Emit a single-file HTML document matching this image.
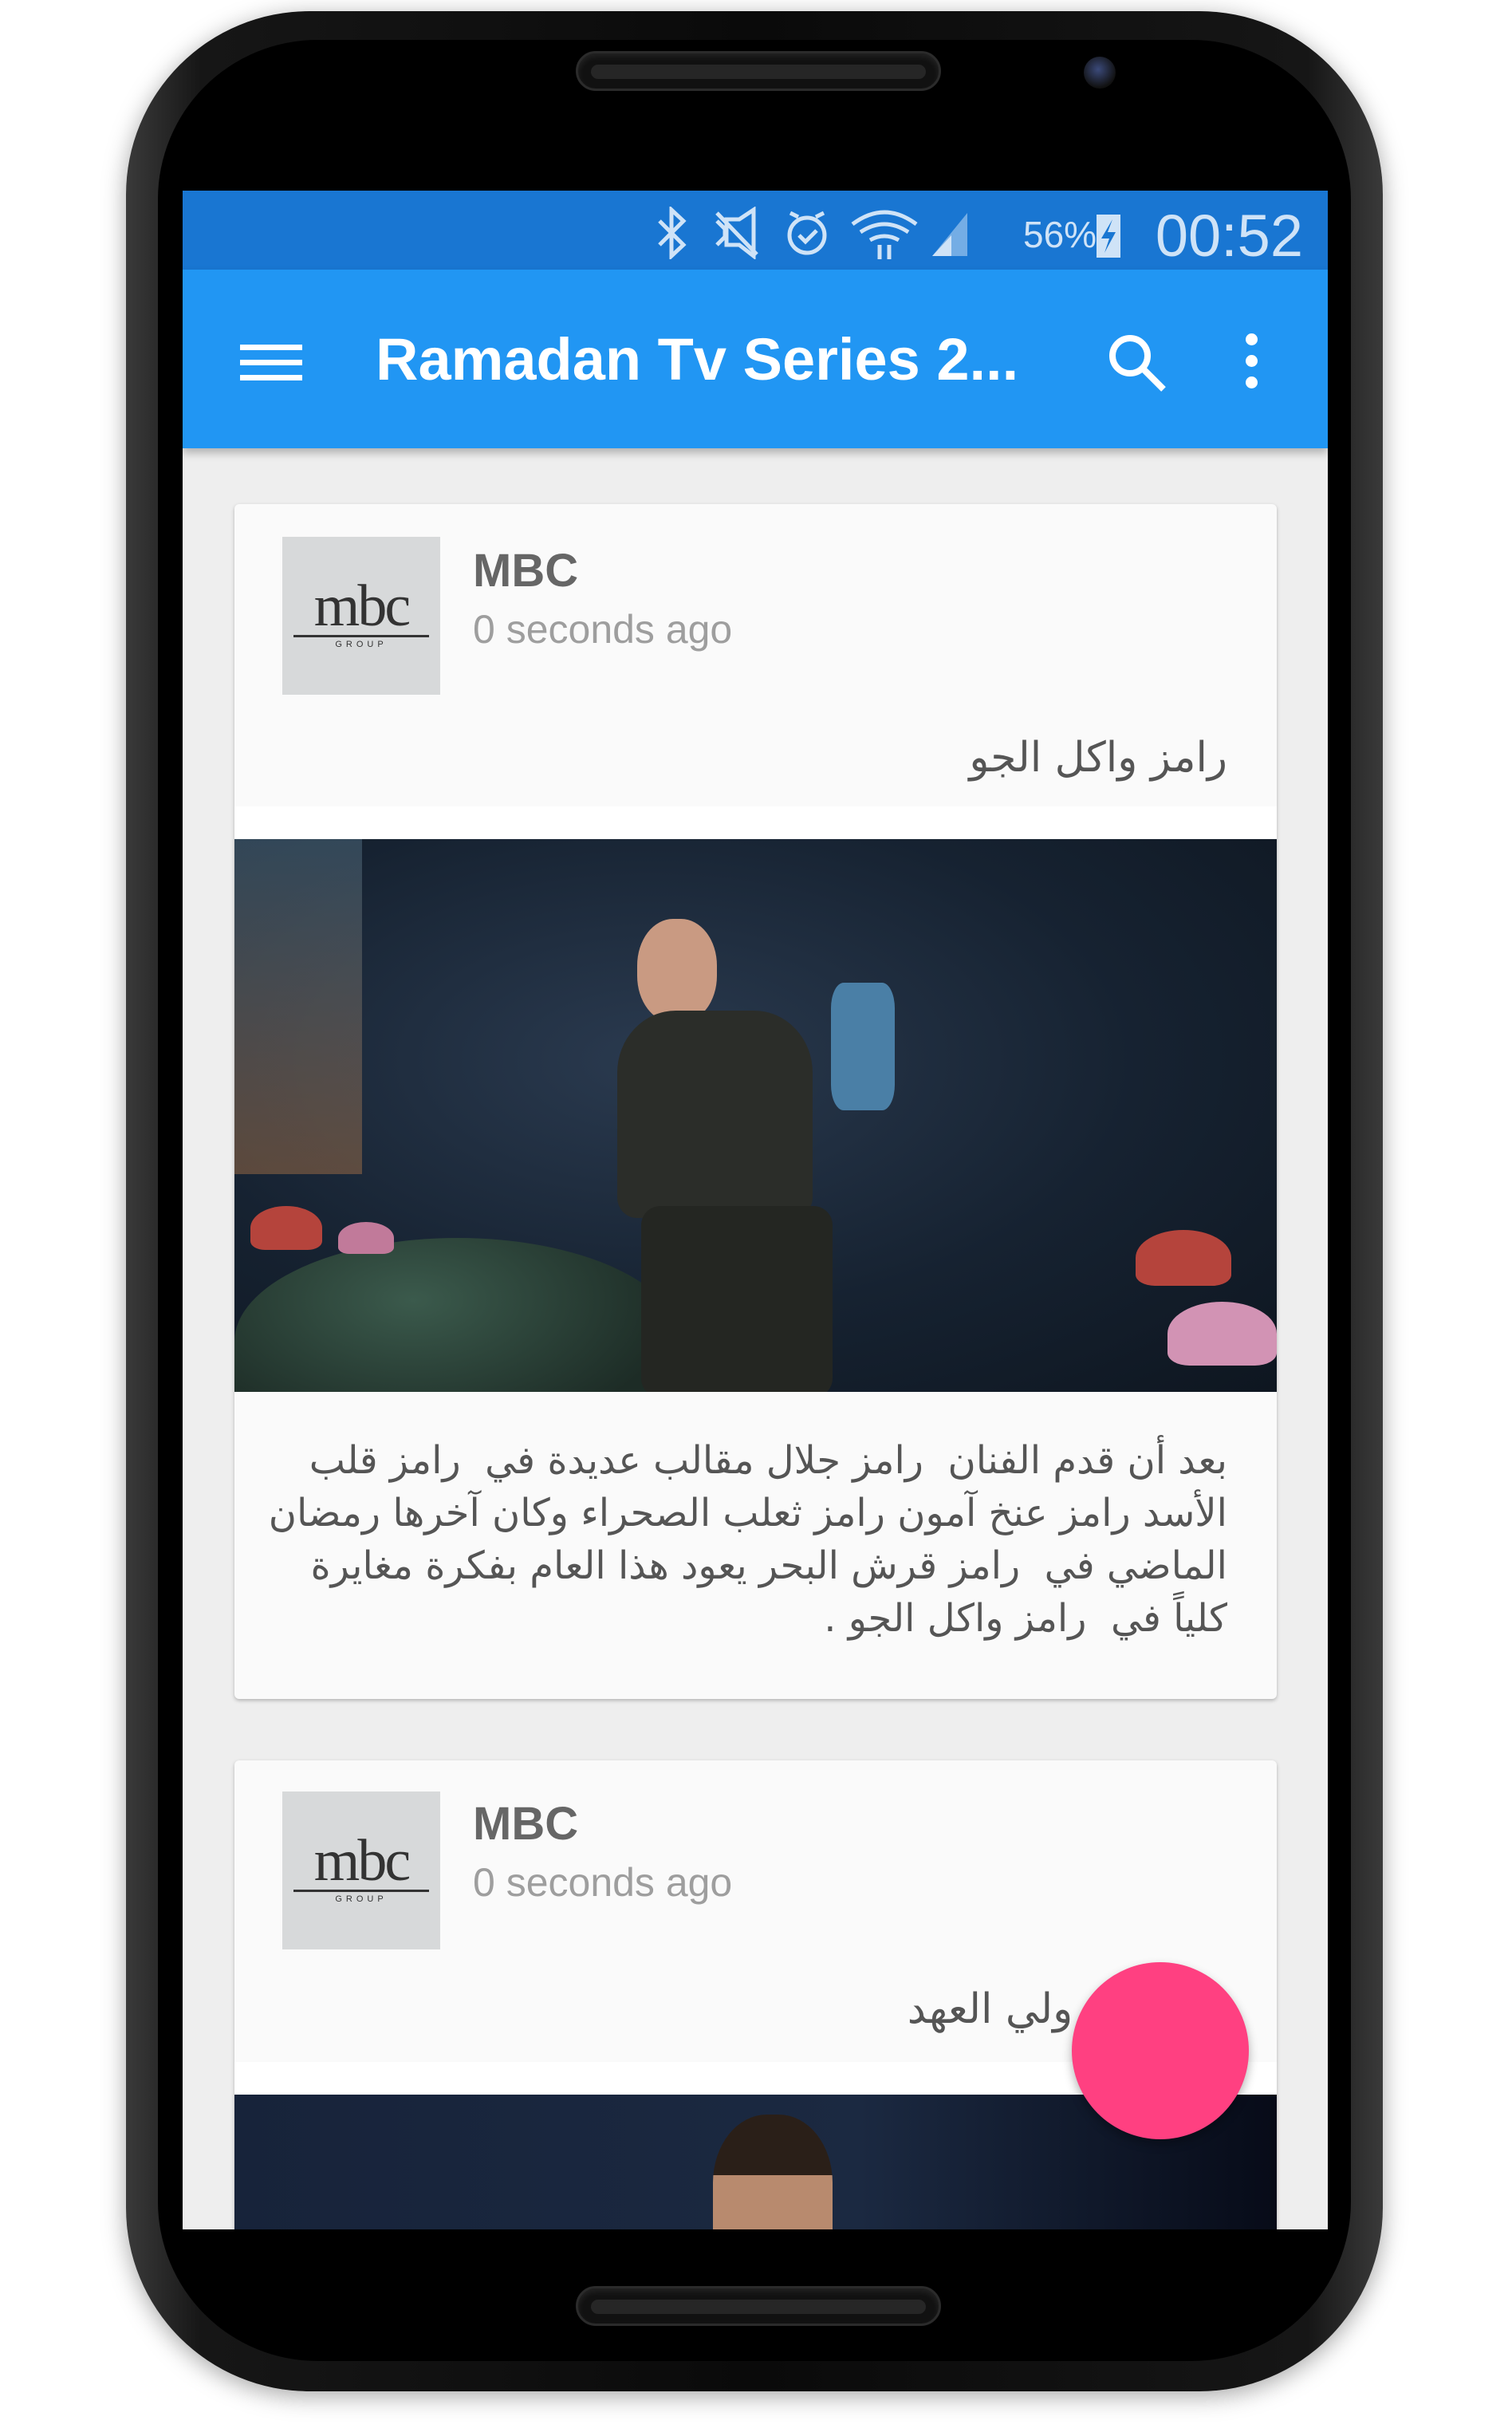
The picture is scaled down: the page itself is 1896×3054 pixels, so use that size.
<!DOCTYPE html>
<html><head><meta charset="utf-8">
<style>
*{margin:0;padding:0;box-sizing:border-box}
body{width:1896px;height:3054px;background:#fff;position:relative;overflow:hidden;font-family:"Liberation Sans","Noto Sans CJK SC",sans-serif}
.abs{position:absolute}
#phone{left:158px;top:14px;width:1576px;height:2984px;border-radius:230px;background:linear-gradient(90deg,#3a3a3a,#161616 6%,#0a0a0a 50%,#161616 94%,#3a3a3a);box-shadow:0 6px 30px rgba(0,0,0,.35)}
#bezel{left:198px;top:50px;width:1496px;height:2910px;border-radius:200px;background:#000}
#screen{left:229px;top:239px;width:1436px;height:2556px;background:#eeeeee;overflow:hidden}
.spk{width:458px;height:50px;border-radius:25px;background:#111;border:3px solid #2b2b2b;box-shadow:inset 0 4px 8px rgba(255,255,255,.08)}
.spk:after{content:"";position:absolute;left:16px;right:16px;top:14px;height:18px;border-radius:9px;background:#262626}
#status{left:0;top:0;width:1436px;height:99px;background:#1976d2}
#appbar{left:0;top:99px;width:1436px;height:224px;background:#2196f3;box-shadow:0 6px 10px rgba(0,0,0,.25)}
.card{left:65px;width:1307px;background:#fafafa;border-radius:6px;box-shadow:0 2px 5px rgba(0,0,0,.25);overflow:hidden}
.logo{left:60px;width:198px;height:198px;background:#d7d9da;display:flex;flex-direction:column;align-items:center;justify-content:center}
.logo b{font-family:"Liberation Serif",serif;font-size:74px;font-weight:normal;color:#333;line-height:60px;letter-spacing:-3px}
.logo i{display:block;width:170px;height:3px;background:#333;margin-top:6px}
.logo s{text-decoration:none;font-size:11px;letter-spacing:5px;color:#333;margin-top:3px}
.mbc{left:299px;font-size:58px;font-weight:bold;color:#666}
.ago{left:299px;font-size:50px;color:#9e9e9e}
.ar{font-family:"DejaVu Sans",sans-serif;direction:rtl;color:#555}
</style></head><body>
<div id="phone" class="abs"></div>
<div id="bezel" class="abs"></div>
<div class="abs spk" style="left:722px;top:64px"></div>
<div class="abs spk" style="left:722px;top:2866px"></div>
<div class="abs" style="left:1359px;top:71px;width:40px;height:40px;border-radius:50%;background:radial-gradient(circle at 45% 40%,#3b4a7a,#111 70%)"></div>
<div id="screen" class="abs">
 <div id="status" class="abs">
  <svg class="abs" style="left:590px;top:20px" width="680" height="66" viewBox="0 0 680 66" fill="none" stroke="#cfe3f7" stroke-width="5">
   <path d="M8 18l30 30-15 14V4l15 14L8 48"/>
   <path d="M80 18l10 10v10l-10 10M92 16h16l18-12v58L108 48H92z M80 8l50 52" />
   <path d="M172 8l10 5M214 8l-10 5"/><circle cx="193" cy="36" r="22"/><path d="M183 36l8 8 14-14"/>
   <path d="M250 22q40-30 80 0M260 32q30-20 60 0M272 42q18-10 36 0"/><path d="M284 48v18M296 48v18"/>
   <path d="M350 62h44V8z" fill="#cfe3f7" stroke="none" opacity=".5"/><path d="M350 62h24V36z" fill="#cfe3f7" stroke="none"/>
   <rect x="556" y="10" width="30" height="54" fill="#cfe3f7" stroke="none"/><path d="M576 16l-14 24h10l-6 18 14-26h-10z" fill="#1976d2" stroke="none"/>
  </svg>
  <div class="abs" style="left:1054px;top:28px;font-size:46px;color:#cfe3f7">56%</div>
  <div class="abs" style="right:31px;top:14px;font-size:74px;color:#cfe3f7">00:52</div>
 </div>
 <div id="appbar" class="abs">
  <div class="abs" style="left:72px;top:94px;width:78px;height:7px;background:#fff"></div>
  <div class="abs" style="left:72px;top:113px;width:78px;height:7px;background:#fff"></div>
  <div class="abs" style="left:72px;top:132px;width:78px;height:7px;background:#fff"></div>
  <div class="abs" style="left:242px;top:70px;font-size:74px;color:#fff;font-weight:bold">Ramadan Tv Series 2...</div>
  <svg class="abs" style="left:1158px;top:78px" width="80" height="80" viewBox="0 0 80 80" fill="none" stroke="#fff" stroke-width="8"><circle cx="30" cy="30" r="22"/><path d="M46 46l26 26"/></svg>
  <div class="abs" style="left:1333px;top:80px;width:15px;height:15px;border-radius:50%;background:#fff;box-shadow:0 27px 0 #fff,0 54px 0 #fff"></div>
 </div>
 <div class="abs card" style="top:393px;height:1498px">
  <div class="abs logo" style="top:41px"><b>mbc</b><i></i><s>GROUP</s></div>
  <div class="abs mbc" style="top:50px">MBC</div>
  <div class="abs ago" style="top:128px">0 seconds ago</div>
  <div class="abs ar" style="right:62px;top:288px;font-size:52px">رامز واكل الجو</div>
  <div class="abs" style="left:0;top:379px;width:1307px;height:41px;background:#fff"></div>
  <div class="abs" style="left:0;top:420px;width:1307px;height:693px;background:radial-gradient(ellipse at 40% 40%,#2a3a4f,#162231 55%,#0e1620);overflow:hidden">
   <div class="abs" style="left:0;top:500px;width:560px;height:260px;border-radius:50% 50% 0 0;background:radial-gradient(ellipse at 40% 30%,#3b5a4c,#1d2c26 70%)"></div>
   <div class="abs" style="left:20px;top:460px;width:90px;height:55px;border-radius:50% 50% 20% 20%;background:#b5443c"></div>
   <div class="abs" style="left:130px;top:480px;width:70px;height:40px;border-radius:50% 50% 20% 20%;background:#c17a9a"></div>
   <div class="abs" style="left:1130px;top:490px;width:120px;height:70px;border-radius:50% 50% 20% 20%;background:#b5443c"></div>
   <div class="abs" style="left:1170px;top:580px;width:137px;height:80px;border-radius:50% 50% 20% 20%;background:#d293b4"></div>
   <div class="abs" style="left:0;top:0;width:160px;height:420px;background:linear-gradient(180deg,rgba(80,110,130,.5),rgba(160,110,70,.5))"></div>
   <div class="abs" style="left:505px;top:100px;width:100px;height:130px;border-radius:45%;background:#c99a82"></div>
   <div class="abs" style="left:480px;top:215px;width:245px;height:260px;border-radius:30% 30% 10% 10%;background:#2b2d29"></div>
   <div class="abs" style="left:510px;top:460px;width:240px;height:240px;border-radius:10%;background:#242622"></div>
   <div class="abs" style="left:748px;top:180px;width:80px;height:160px;border-radius:20%;background:#4a7fa6"></div>
  </div>
  <div class="abs ar" style="right:62px;top:1166px;width:1220px;font-size:48px;line-height:66px;text-align:right">بعد أن قدم الفنان&nbsp; رامز جلال مقالب عديدة في&nbsp; رامز قلب<br>الأسد رامز عنخ آمون رامز ثعلب الصحراء وكان آخرها رمضان<br>الماضي في&nbsp; رامز قرش البحر يعود هذا العام بفكرة مغايرة<br>كلياً في&nbsp; رامز واكل الجو .</div>
 </div>
 <div class="abs card" style="top:1968px;height:700px">
  <div class="abs logo" style="top:39px"><b>mbc</b><i></i><s>GROUP</s></div>
  <div class="abs mbc" style="top:46px">MBC</div>
  <div class="abs ago" style="top:124px">0 seconds ago</div>
  <div class="abs ar" style="right:62px;top:282px;font-size:52px">مسلسل ولي العهد</div>
  <div class="abs" style="left:0;top:378px;width:1307px;height:41px;background:#fff"></div>
  <div class="abs" style="left:0;top:419px;width:1307px;height:300px;background:linear-gradient(90deg,#17233a,#1b2941 60%,#070b18)">
   <div class="abs" style="left:600px;top:25px;width:150px;height:190px;border-radius:45% 45% 0 0;background:linear-gradient(180deg,#2a1f18 40%,#b88a6e 40%)"></div>
  </div>
 </div>
 <div class="abs" style="left:1115px;top:2221px;width:222px;height:222px;border-radius:50%;background:#ff4081;box-shadow:0 6px 12px rgba(0,0,0,.3)"></div>
</div>
</body></html>
